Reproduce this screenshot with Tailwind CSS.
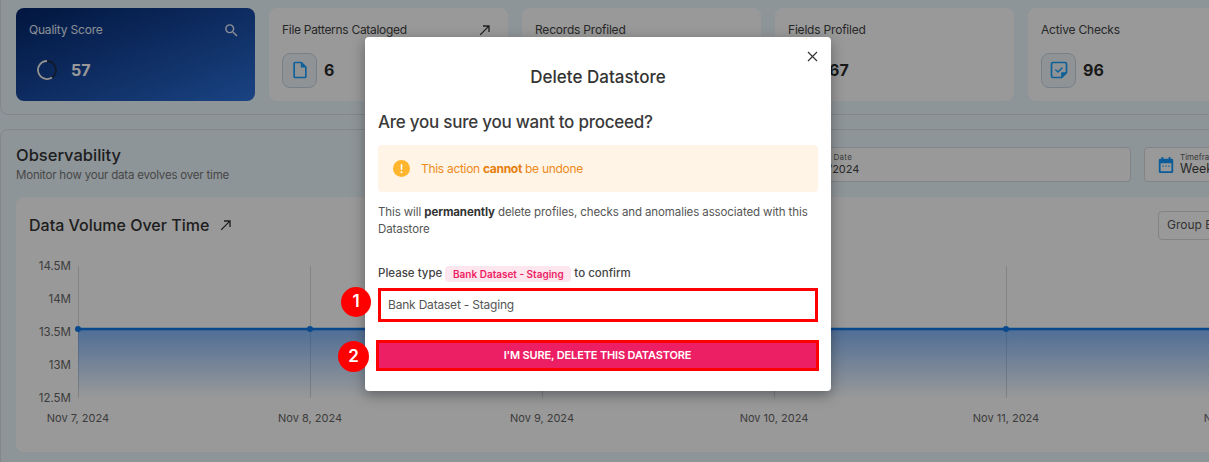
<!DOCTYPE html>
<html lang="en">
<head>
  <meta charset="UTF-8">
  <title>Delete Datastore</title>
  <script src="https://cdn.jsdelivr.net/npm/@tailwindcss/browser@4"></script>
</head>
<body class="relative h-[462px] w-[1209px] overflow-hidden bg-[#edf8ff] font-['Inter','Noto_Sans',sans-serif] text-[#2b2b2b]">
  <!-- page behind the dialog -->
  <div class="w-[1290px]">
    <section class="flex h-[115px] gap-[14px] rounded-b-lg border border-t-0 border-[#d8e2e8] pt-2 pl-[15px]">
      <div class="h-[93px] w-[239px] rounded-lg bg-gradient-to-br from-[#05256a] to-[#2d71db] px-[13px] pt-[14px] text-white">
        <div class="flex h-4 items-center justify-between pr-[2px]">
          <span class="text-[12px] tracking-[-0.2px] text-[#e5edf8]">Quality Score</span>
          <svg class="size-[17px]" viewBox="0 0 24 24" fill="#e8eef8"><path d="M15.5 14h-.79l-.28-.27A6.47 6.47 0 0 0 16 9.5 6.5 6.5 0 1 0 9.5 16c1.61 0 3.09-.59 4.23-1.57l.27.28v.79l5 4.99L20.49 19l-4.99-5zm-6 0C7.01 14 5 11.99 5 9.5S7.01 5 9.5 5 14 7.01 14 9.5 11.99 14 9.5 14z"/></svg>
        </div>
        <div class="mt-[14px] flex h-[36px] items-center gap-[14px] pl-[8px]">
          <svg class="size-[20px]" viewBox="0 0 20 20" fill="none" stroke-width="1.800"><circle cx="10" cy="10" r="9" stroke="#1d2a44"/><path d="M10 1A9 9 0 1 0 15 17.500" stroke="#f1f3f6"/></svg>
          <span class="text-[16px] font-bold">57</span>
        </div>
      </div>

      <div class="h-[93px] w-[239px] rounded-lg bg-white px-[13px] pt-[14px]">
        <div class="flex h-4 items-center justify-between pr-[2px]">
          <span class="text-[12px] tracking-[-0.3px] text-[#444]">File Patterns Cataloged</span>
          <svg class="size-[16px]" viewBox="0 0 24 24" fill="#333"><path d="M9 5v2h6.590L4 18.590 5.410 20 17 8.410V15h2V5z"/></svg>
        </div>
        <div class="mt-[14px] flex h-[36px] items-center gap-[7px]">
          <div class="flex size-[35px] items-center justify-center rounded-lg border border-[#c9d6e2] bg-[#f0f6fb]">
            <svg class="size-[20px]" viewBox="0 0 24 24" fill="#18a0ff"><path d="M14 2H6c-1.100 0-1.990.9-1.990 2L4 20c0 1.100.89 2 1.990 2H18c1.100 0 2-.9 2-2V8l-6-6zM6 20V4h7v5h5v11H6z"/></svg>
          </div>
          <span class="text-[16px] font-bold">6</span>
        </div>
      </div>

      <div class="h-[93px] w-[239px] rounded-lg bg-white px-[13px] pt-[14px]">
        <div class="flex h-4 items-center text-[12px] tracking-[-0.2px] text-[#444]">Records Profiled</div>
      </div>

      <div class="h-[93px] w-[239px] rounded-lg bg-white px-[13px] pt-[14px]">
        <div class="flex h-4 items-center text-[12px] tracking-[-0.2px] text-[#444]">Fields Profiled</div>
        <div class="mt-[14px] flex h-[36px] items-center gap-[6px]">
          <div class="size-[35px] rounded-lg border border-[#c9d6e2] bg-[#f0f6fb]"></div>
          <span class="text-[16px] font-bold">67</span>
        </div>
      </div>

      <div class="h-[93px] w-[239px] rounded-lg bg-white px-[13px] pt-[14px]">
        <div class="flex h-4 items-center text-[12px] tracking-[-0.2px] text-[#444]">Active Checks</div>
        <div class="mt-[14px] flex h-[36px] items-center gap-[7px]">
          <div class="flex size-[35px] items-center justify-center rounded-lg border border-[#c9d6e2] bg-[#f0f6fb]">
            <svg class="size-[20px]" viewBox="0 0 20 20" fill="none" stroke="#18a0ff" stroke-width="1.700" stroke-linejoin="round" stroke-linecap="round"><path d="M4 2.500h12a1.500 1.500 0 0 1 1.500 1.500v8.500l-5 5H4A1.500 1.500 0 0 1 2.500 16V4A1.500 1.500 0 0 1 4 2.500z"/><path d="M6.800 10l2.200 2 4-4" stroke-width="1.500"/><path d="M17 13h-4v4z" fill="#18a0ff"/></svg>
          </div>
          <span class="text-[16px] font-bold">96</span>
        </div>
      </div>
    </section>

    <section class="mt-[14px] h-[340px] rounded-t-lg border border-[#d8e2e8] pt-[14px] pl-[15px]">
      <div class="flex h-[53px] items-start justify-between">
        <div>
          <h2 class="text-[16.500px] leading-[22px] font-medium text-[#333]">Observability</h2>
          <p class="mt-px text-[11.500px] leading-[16px] tracking-[-0.2px] text-[#777]">Monitor how your data evolves over time</p>
        </div>
        <div class="flex gap-[13px] pt-[3px]">
          <div class="flex h-[35px] w-[359px] flex-col rounded border border-[#d5dce2] bg-white pt-[5px] pl-[31px] leading-none">
            <span class="text-[8px] tracking-[0.3px] text-[#666]">Report Date</span>
            <span class="mt-[3px] text-[11px] text-[#444]">11/13/2024</span>
          </div>
          <div class="flex h-[35px] w-[145px] items-center gap-[5px] rounded border border-[#d5dce2] bg-white pl-[12px] leading-none">
            <svg class="size-[18px]" viewBox="0 0 20 20" fill="#1399ff"><path d="M5 1h2v2h6V1h2v2h1.500A1.500 1.500 0 0 1 18 4.500v13a1.500 1.500 0 0 1-1.500 1.500h-13A1.500 1.500 0 0 1 2 17.500v-13A1.500 1.500 0 0 1 3.500 3H5zM4 8v9h12V8zm2 2.500h1.500V12H6zm3.300 0h1.500V12H9.300zm3.200 0H14V12h-1.500z" fill-rule="evenodd"/></svg>
            <div class="flex flex-col">
              <span class="text-[8px] text-[#666]">Timeframe</span>
              <span class="mt-[2px] text-[12.500px] text-[#444]">Weekly</span>
            </div>
          </div>
        </div>
      </div>

      <div class="h-[255px] w-[1260px] rounded-lg bg-white">
        <div class="flex h-[56px] items-center justify-between pl-[13px]">
          <div class="flex items-center gap-[9px]">
            <h3 class="text-[16px] font-medium text-[#333]">Data Volume Over Time</h3>
            <svg class="size-[16px]" viewBox="0 0 24 24" fill="#333"><path d="M9 5v2h6.590L4 18.590 5.410 20 17 8.410V15h2V5z"/></svg>
          </div>
          <div class="flex h-[29px] w-[118px] items-center rounded border border-[#d5dce2] pl-2 text-[12px] text-[#555]">Group By</div>
        </div>
        <svg class="block h-[199px] w-[1260px]" viewBox="0 0 1260 199" font-size="11.500" fill="#666" text-anchor="end">
          <defs>
            <linearGradient id="area" x1="0" y1="0" x2="0" y2="1">
              <stop offset="0" stop-color="#0a6ff5" stop-opacity="0.5"/>
              <stop offset="1" stop-color="#0a6ff5" stop-opacity="0"/>
            </linearGradient>
          </defs>
          <text x="55" y="17">14.5M</text>
          <text x="55" y="50">14M</text>
          <text x="55" y="83">13.5M</text>
          <text x="55" y="116">13M</text>
          <text x="55" y="149">12.5M</text>
          <path d="M62.500 13V145M294.500 13V145M526.500 13V145M758.500 13V145M990.500 13V145M1222.500 13V145" stroke="#dadada" stroke-width="1"/>
          <rect x="62" y="76" width="1198" height="69" fill="url(#area)"/>
          <path d="M62 76H1260" stroke="#0f7be8" stroke-width="2.500"/>
          <g fill="#0f7be8">
            <circle cx="62" cy="76" r="3"/><circle cx="294" cy="76" r="3"/><circle cx="526" cy="76" r="3"/><circle cx="758" cy="76" r="3"/><circle cx="990" cy="76" r="3"/><circle cx="1222" cy="76" r="3"/>
          </g>
          <g text-anchor="middle" font-size="11">
            <text x="62" y="169">Nov 7, 2024</text>
            <text x="294" y="169">Nov 8, 2024</text>
            <text x="526" y="169">Nov 9, 2024</text>
            <text x="758" y="169">Nov 10, 2024</text>
            <text x="990" y="169">Nov 11, 2024</text>
            <text x="1222" y="169">Nov 12, 2024</text>
          </g>
        </svg>
      </div>
    </section>
  </div>

  <!-- dialog -->
  <div class="absolute inset-0 flex items-start justify-center bg-black/40 pt-[37px] pr-[13px]">
    <div class="relative h-[354px] w-[466px] rounded bg-white px-[13px] shadow-[0_4px_14px_rgba(0,0,0,0.35)]">
      <svg class="absolute top-[13px] right-[12px] size-[13px]" viewBox="0 0 13 13" stroke="#333" stroke-width="1.200"><path d="M2 2l9 9M11 2l-9 9"/></svg>
      <h2 class="pt-[29px] text-center text-[17px] leading-[22px] font-medium text-[#333]">Delete Datastore</h2>
      <p class="mt-[22px] text-[17px] leading-[24px] font-medium tracking-[-0.25px] text-[#3a3a3a]">Are you sure you want to proceed?</p>
      <div class="mt-[11px] flex h-[47px] items-center gap-[11px] rounded bg-[#fff4e5] pl-[15px] text-[12px] tracking-[-0.3px] text-[#ed8a1c]">
        <svg class="size-[17px]" viewBox="0 0 17 17"><circle cx="8.500" cy="8.500" r="8.500" fill="#ffb52e"/><rect x="7.700" y="4" width="1.600" height="6" rx=".8" fill="#fff"/><circle cx="8.500" cy="12.300" r="1" fill="#fff"/></svg>
        <span>This action <b class="font-bold text-[#e67e0d]">cannot</b> be undone</span>
      </div>
      <p class="mt-[12px] text-[11.500px] leading-[17px] tracking-[-0.1px] text-[#555]">This will <b class="font-bold text-[#333]">permanently</b> delete profiles, checks and anomalies associated with this Datastore</p>
      <div class="mt-[28px] flex h-[16px] items-center text-[11.500px] font-medium text-[#444]">
        Please type
        <span class="mx-[3px] flex h-[16px] w-[126px] items-center justify-center rounded bg-[#fde6ee] text-[10px] font-semibold text-[#ed1f64]">Bank Dataset - Staging</span>
        to confirm
      </div>
      <div class="mt-[6px] flex h-[34px] items-center border-[3px] border-[#ff0000] pl-[7px] text-[12px] tracking-[-0.2px] text-[#555]">Bank Dataset - Staging</div>
      <button class="mt-[18px] -ml-[2px] block h-[31px] w-[443px] border-[3px] border-[#ff0000] bg-[#ed1f64] text-center text-[11px] font-semibold tracking-[-0.15px] text-white">I'M SURE, DELETE THIS DATASTORE</button>

      <div class="absolute top-[250px] left-[-24px] flex size-[30px] items-center justify-center rounded-full bg-[#ff0000] text-[17px] font-semibold text-white">1</div>
      <div class="absolute top-[304px] left-[-27px] flex size-[31px] items-center justify-center rounded-full bg-[#ff0000] text-[17px] font-semibold text-white">2</div>
    </div>
  </div>
</body>
</html>
